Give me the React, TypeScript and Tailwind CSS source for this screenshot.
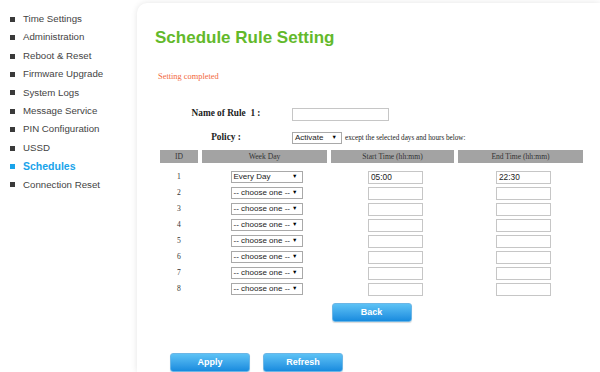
import React from 'react';

const menu = [
  'Time Settings',
  'Administration',
  'Reboot & Reset',
  'Firmware Upgrade',
  'System Logs',
  'Message Service',
  'PIN Configuration',
  'USSD',
  'Schedules',
  'Connection Reset',
];

const rows = [
  { id: 1, day: 'Every Day', start: '05:00', end: '22:30' },
  { id: 2, day: '-- choose one --', start: '', end: '' },
  { id: 3, day: '-- choose one --', start: '', end: '' },
  { id: 4, day: '-- choose one --', start: '', end: '' },
  { id: 5, day: '-- choose one --', start: '', end: '' },
  { id: 6, day: '-- choose one --', start: '', end: '' },
  { id: 7, day: '-- choose one --', start: '', end: '' },
  { id: 8, day: '-- choose one --', start: '', end: '' },
];

const sans = "font-['Liberation_Sans',Arial,sans-serif]";
const serif = "font-['Liberation_Serif','Times_New_Roman',serif]";

function FakeSelect({ value, width }: { value: string; width: string }) {
  return (
    <div className={`${width} h-[12px] flex items-center justify-between border border-[#a9a9a9] bg-white pl-[2px] pr-[4px] ${sans} text-[8px] leading-none text-[#222]`}>
      <span className="whitespace-nowrap">{value}</span>
      <span className="text-[5.5px] text-black">▼</span>
    </div>
  );
}

function TextBox({ value, width }: { value: string; width: string }) {
  return (
    <div className={`${width} h-[13px] flex items-center border border-[#c6c6c6] bg-white px-[2px] ${sans} text-[8.3px] leading-none text-[#222]`}>
      {value}
    </div>
  );
}

function BlueButton({ label }: { label: string }) {
  return (
    <button className={`w-[80px] h-[19px] rounded-[3px] border border-[#6cb6e6] bg-gradient-to-b from-[#5cc2f5] to-[#168bde] text-white font-bold text-[9px] ${sans} shadow-[0_1px_1px_rgba(0,0,0,0.15)]`}>
      {label}
    </button>
  );
}

export default function App() {
  return (
    <div className="w-[600px] h-[372px] bg-white flex overflow-hidden">
      {/* side menu */}
      <ul className={`w-[137px] shrink-0 pt-[10px] pl-[10px] ${sans} text-[9.7px] leading-[18.4px]`}>
        {menu.map((m) => {
          const active = m === 'Schedules';
          return (
            <li key={m} className="flex items-center gap-[8px]">
              <span className={`w-[5px] h-[5px] ${active ? 'bg-[#19a3ea]' : 'bg-[#3a3a3a]'}`} />
              <span className={active ? 'text-[#19a3ea] font-bold text-[10.5px]' : 'text-[#444]'}>{m}</span>
            </li>
          );
        })}
      </ul>

      {/* content panel */}
      <div className="flex-1 mt-[3px] rounded-tl-[10px] bg-white shadow-[0_0_6px_rgba(0,0,0,0.11)] pl-[18px] pt-[24px]">
        <h1 className={`${sans} font-bold text-[17px] leading-[22px] text-[#63b92b]`}>Schedule Rule Setting</h1>
        <div className={`${serif} text-[8.4px] leading-[12px] text-[#f2683c] mt-[22px] ml-[3px]`}>Setting completed</div>

        <div className="ml-[5px] mt-[24px] w-[423px]">
          <div className="flex items-center h-[14px]">
            <div className={`w-[132px] text-center ${serif} font-bold text-[9.3px] text-[#222] whitespace-pre`}>Name of Rule  1 :</div>
            <TextBox value="" width="w-[97px]" />
          </div>
          <div className="flex items-center h-[14px] mt-[10px]">
            <div className={`w-[132px] text-center ${serif} font-bold text-[9.3px] text-[#222]`}>Policy :</div>
            <FakeSelect value="Activate" width="w-[50px]" />
            <span className={`ml-[3px] ${serif} text-[7.2px] text-[#222] whitespace-nowrap`}>except the selected days and hours below:</span>
          </div>

          <div className={`mt-[5px] grid grid-cols-[38px_125px_123px_125px] gap-x-[4px] ${serif} text-[7.6px] text-[#333]`}>
            {['ID', 'Week Day', 'Start Time (hh:mm)', 'End Time (hh:mm)'].map((h) => (
              <div key={h} className="h-[13px] bg-[#a3a3a3] flex items-center justify-center">{h}</div>
            ))}
          </div>

          <div className="mt-[6px] grid grid-cols-[38px_125px_123px_125px] gap-x-[4px]">
            {rows.map((r) => (
              <React.Fragment key={r.id}>
                <div className={`h-[16px] flex items-center justify-center ${serif} text-[7.6px] text-[#333]`}>{r.id}</div>
                <div className="h-[16px] flex items-center justify-center pl-[4px]"><FakeSelect value={r.day} width="w-[72px]" /></div>
                <div className="h-[16px] flex items-center justify-center pl-[6px]"><TextBox value={r.start} width="w-[55px]" /></div>
                <div className="h-[16px] flex items-center justify-center pl-[6px]"><TextBox value={r.end} width="w-[55px]" /></div>
              </React.Fragment>
            ))}
          </div>

          <div className="mt-[6px] flex justify-center">
            <BlueButton label="Back" />
          </div>
        </div>

        <div className="mt-[31px] ml-[15px] flex gap-[13px]">
          <BlueButton label="Apply" />
          <BlueButton label="Refresh" />
        </div>
      </div>
    </div>
  );
}
